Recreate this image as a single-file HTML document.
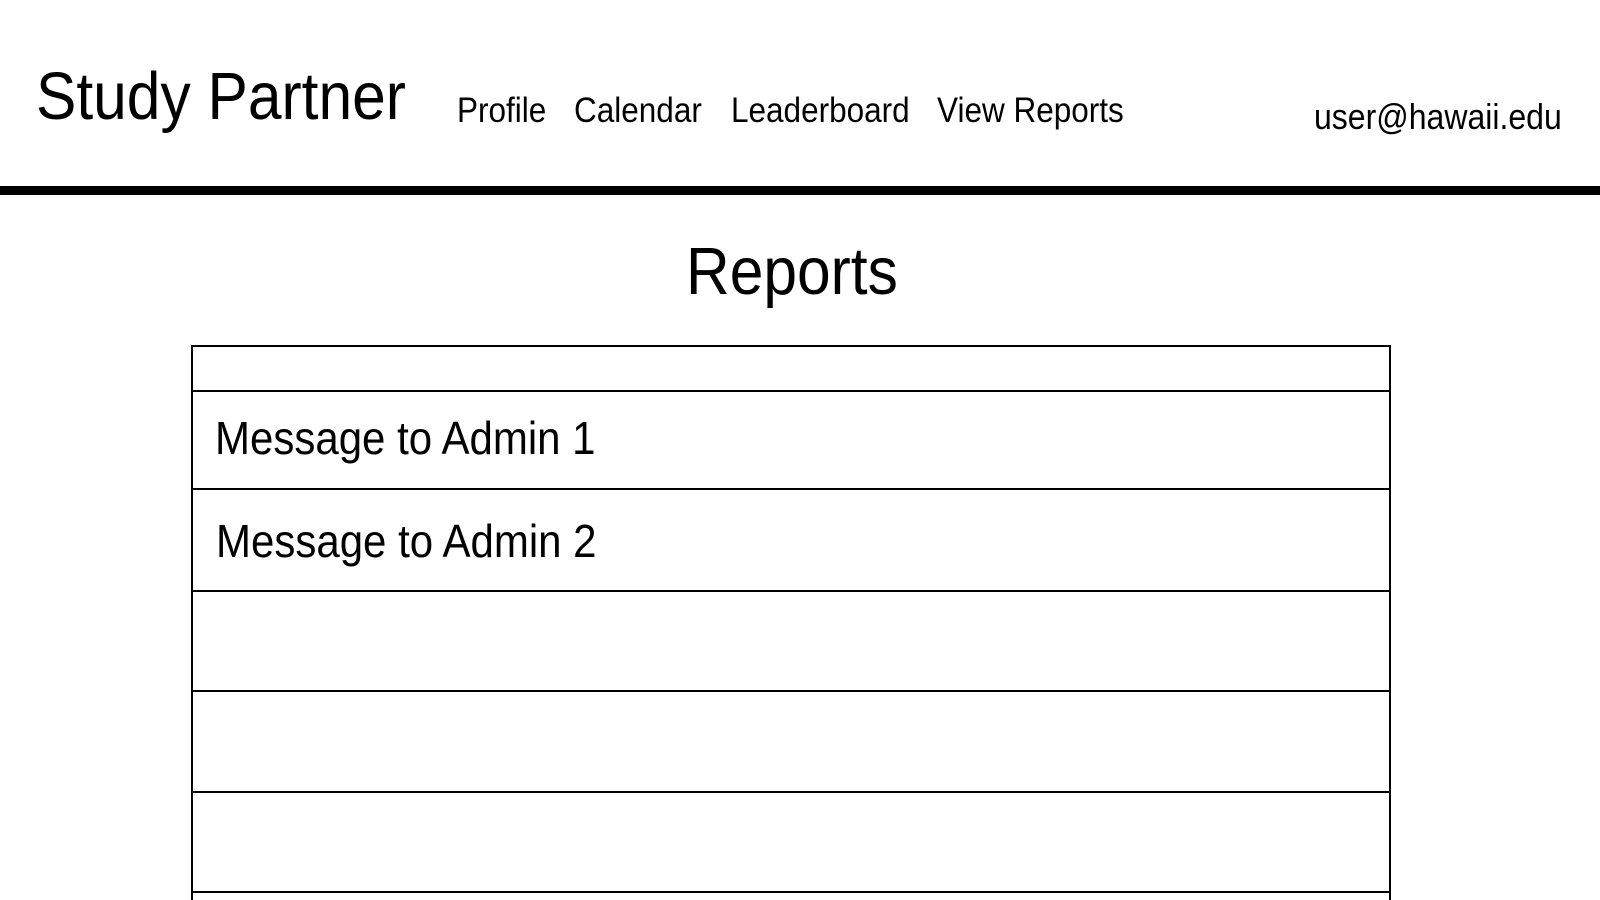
<!DOCTYPE html>
<html><head><meta charset="utf-8"><style>
html,body{margin:0;padding:0;background:#fff;width:1600px;height:900px;overflow:hidden;position:relative;font-family:"Liberation Sans",Arial,sans-serif;color:#000}
.t{position:absolute;line-height:1;white-space:nowrap;transform-origin:0 0}
.hl{position:absolute;left:192px;width:1198px;height:2px;background:#000}
</style></head><body>
<div class="t" style="left:36px;top:63px;font-size:60.5px;transform:scaleY(1.1)">Study Partner</div>
<div class="t" style="left:457px;top:93px;font-size:31.5px;transform:scaleY(1.12)">Profile</div>
<div class="t" style="left:574px;top:93px;font-size:31.5px;transform:scaleY(1.12)">Calendar</div>
<div class="t" style="left:731px;top:93px;font-size:31.5px;transform:scaleY(1.12)">Leaderboard</div>
<div class="t" style="left:937px;top:93px;font-size:31.5px;transform:scaleY(1.12)">View Reports</div>
<div class="t" style="left:1314px;top:99px;font-size:32px;transform:scaleY(1.12)">user@hawaii.edu</div>
<div style="position:absolute;left:0;top:186px;width:1600px;height:9px;background:#000"></div>
<div class="t" style="left:686px;top:238px;font-size:60.5px;transform:scaleY(1.1)">Reports</div>
<div style="position:absolute;left:191px;top:345px;width:2px;height:560px;background:#000"></div>
<div style="position:absolute;left:1389px;top:345px;width:2px;height:560px;background:#000"></div>
<div class="hl" style="top:345px"></div>
<div class="hl" style="top:390px"></div>
<div class="hl" style="top:488px"></div>
<div class="hl" style="top:590px"></div>
<div class="hl" style="top:690px"></div>
<div class="hl" style="top:791px"></div>
<div class="hl" style="top:891px"></div>
<div class="t" style="left:215px;top:415px;font-size:42px;transform:scaleY(1.11)">Message to Admin 1</div>
<div class="t" style="left:216px;top:518px;font-size:42px;transform:scaleY(1.11)">Message to Admin 2</div>
</body></html>
